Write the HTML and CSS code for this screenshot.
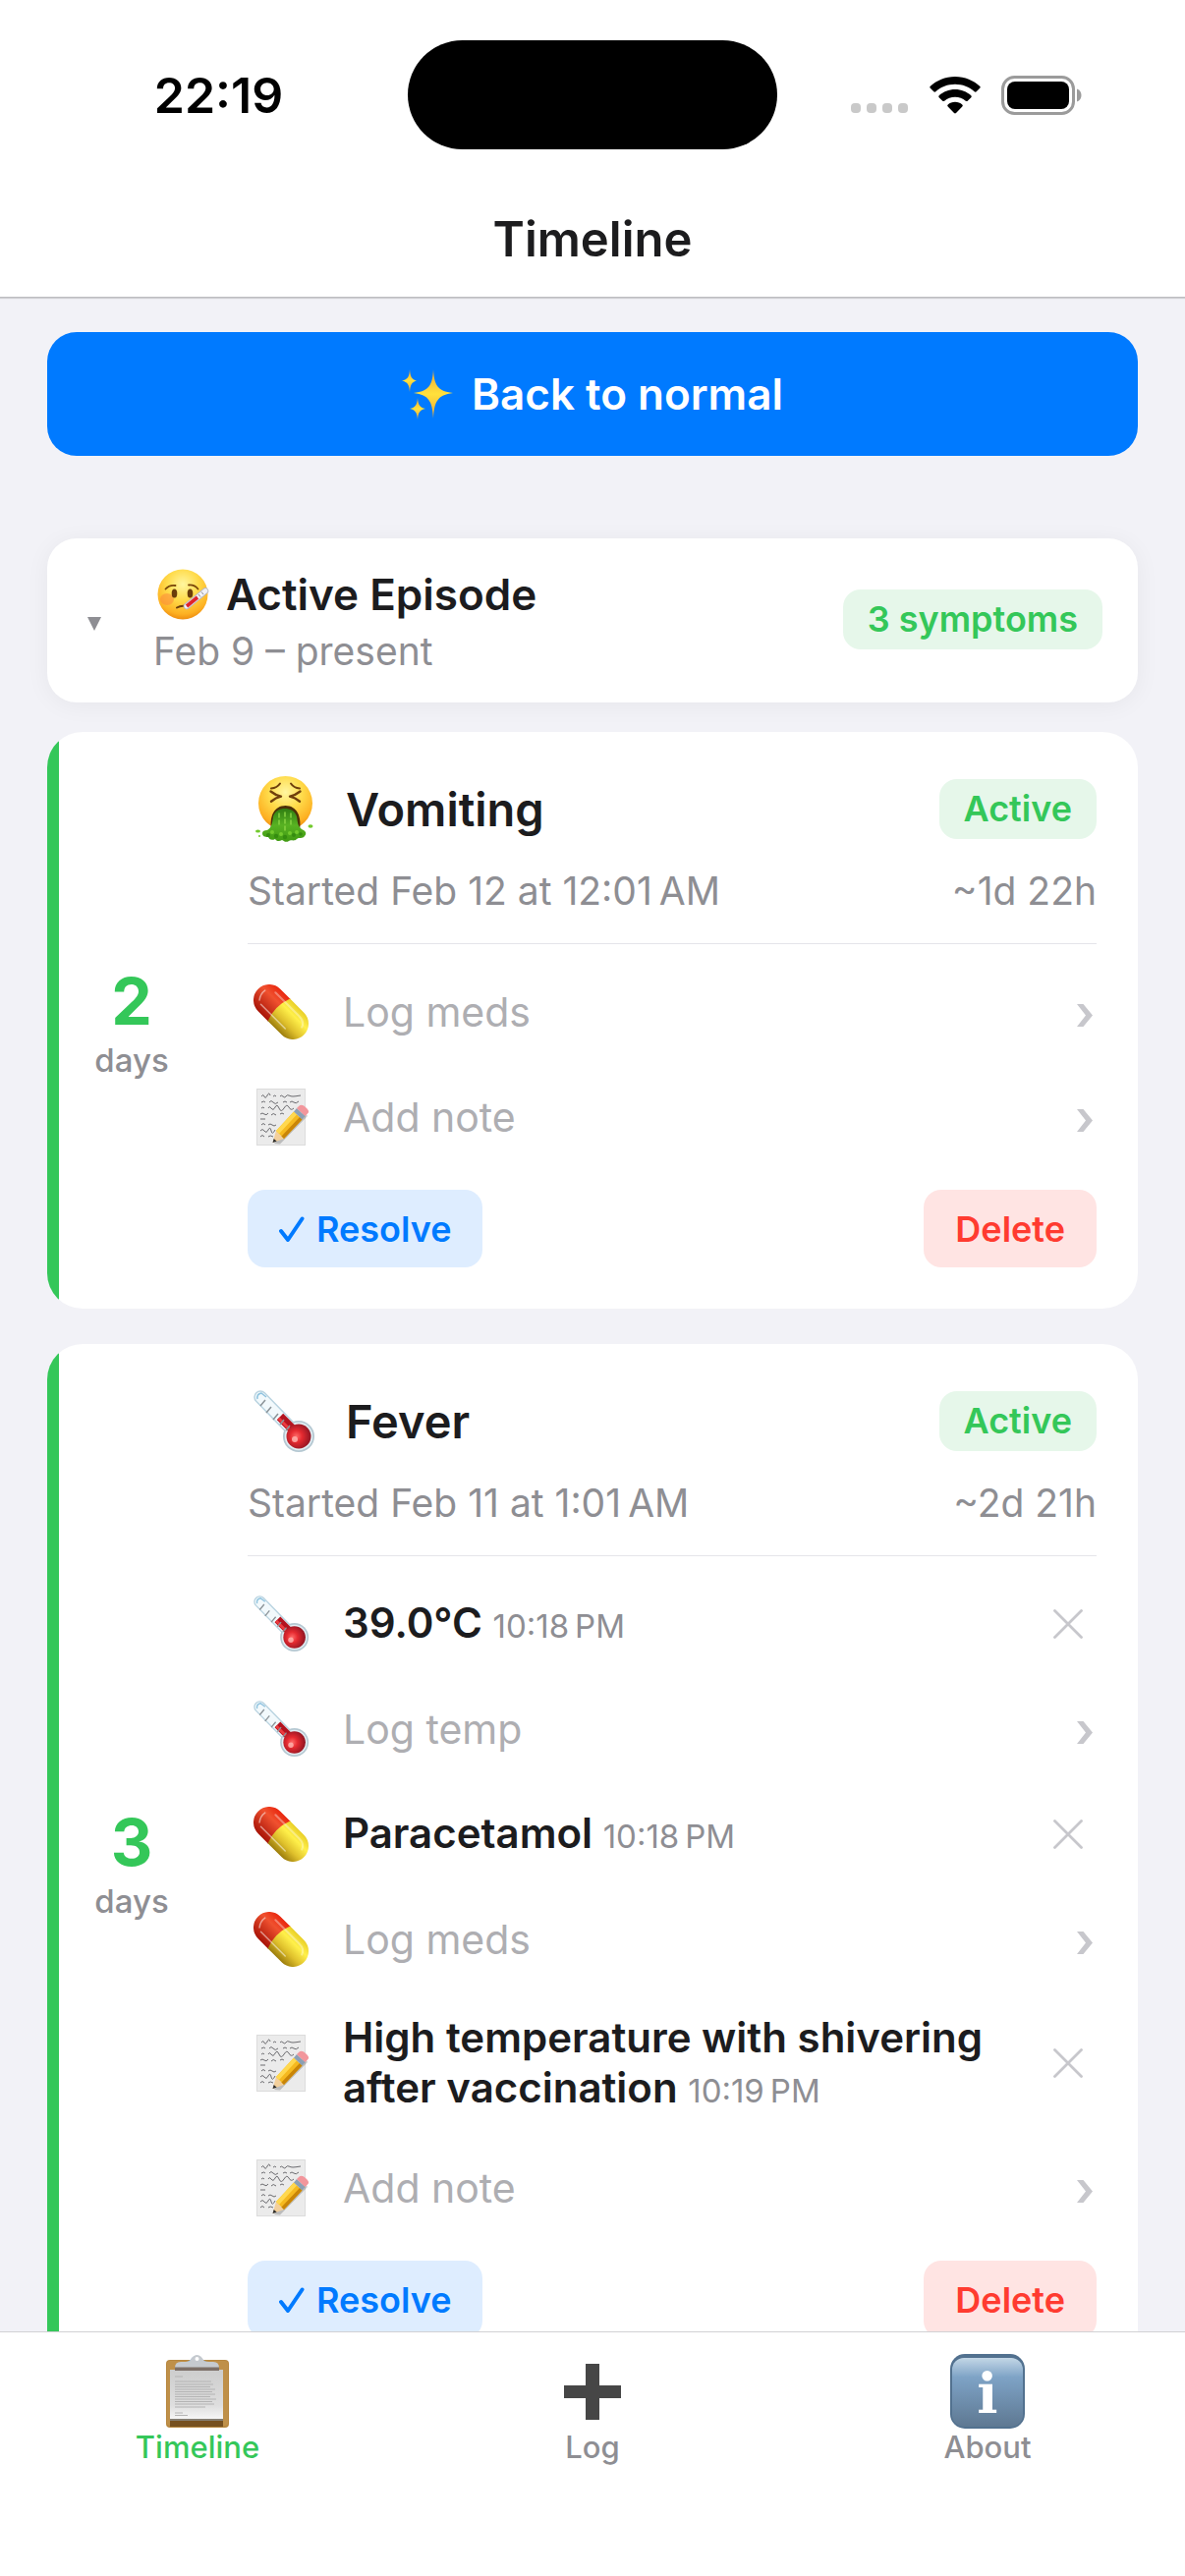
FILE: index.html
```html
<!DOCTYPE html>
<html lang="en">
<head>
    <meta charset="UTF-8">
    <meta name="viewport" content="width=device-width, initial-scale=1.0">
    <title>Timeline</title>
    <link rel="stylesheet" href="styles.css">
</head>
<body>
    <!-- Shared icons -->
    <svg class="sprite" width="0" height="0" aria-hidden="true">
        <defs>
            <radialGradient id="faceFill" cx="0.5" cy="0.3" r="0.7">
                <stop offset="0" stop-color="#fff6a0"/>
                <stop offset="0.45" stop-color="#ffdb4a"/>
                <stop offset="0.85" stop-color="#fdb022"/>
                <stop offset="1" stop-color="#ee8d10"/>
            </radialGradient>
            <linearGradient id="starFill" x1="0" y1="0" x2="0" y2="1">
                <stop offset="0" stop-color="#f0a535"/>
                <stop offset="0.5" stop-color="#ffe13c"/>
                <stop offset="1" stop-color="#f0a535"/>
            </linearGradient>
            <linearGradient id="pillRed" x1="0" y1="0" x2="0" y2="1">
                <stop offset="0" stop-color="#e9270f"/>
                <stop offset="0.35" stop-color="#f0512f"/>
                <stop offset="1" stop-color="#a81408"/>
            </linearGradient>
            <linearGradient id="pillYellow" x1="0" y1="0" x2="0" y2="1">
                <stop offset="0" stop-color="#e9cf28"/>
                <stop offset="0.3" stop-color="#fff04a"/>
                <stop offset="0.65" stop-color="#dfc02c"/>
                <stop offset="1" stop-color="#9c7d0c"/>
            </linearGradient>
            <linearGradient id="vomitFill" x1="0" y1="0" x2="0" y2="1">
                <stop offset="0" stop-color="#2f7d12"/>
                <stop offset="0.5" stop-color="#58b222"/>
                <stop offset="1" stop-color="#3f9a12"/>
            </linearGradient>
            <radialGradient id="bulbFill" cx="0.4" cy="0.5" r="0.6">
                <stop offset="0" stop-color="#ff6a68"/>
                <stop offset="0.4" stop-color="#e52a30"/>
                <stop offset="1" stop-color="#8e1422"/>
            </radialGradient>
            <linearGradient id="paperFill" x1="0" y1="0" x2="0" y2="1">
                <stop offset="0" stop-color="#cdcdcd"/>
                <stop offset="0.7" stop-color="#dedede"/>
                <stop offset="1" stop-color="#fafafa"/>
            </linearGradient>
            <linearGradient id="infoFill" x1="0" y1="0" x2="0" y2="1">
                <stop offset="0" stop-color="#c3d7e6"/>
                <stop offset="0.28" stop-color="#7ea3c6"/>
                <stop offset="1" stop-color="#5e7892"/>
            </linearGradient>
        </defs>

        <symbol id="icon-sparkles" viewBox="0 0 53 51">
            <path d="M32 0c1 16 4 22 20 24c-16 2-19 9-20 26c-1-17-4-24-20-26c16-2 19-8 20-24z" fill="url(#starFill)"/>
            <path d="M8 0c.6 8 2 10 7 11.500c-5 1.500-6.400 4-7 11.500c-.6-7.500-2-10-8-11.500c6-1.500 7.400-3.500 8-11.500z" fill="url(#starFill)"/>
            <path d="M16 29c.6 7 2 9.500 8 11c-6 1.500-7.400 4-8 11c-.6-7-2-9.500-8-11c6-1.500 7.400-4 8-11z" fill="url(#starFill)"/>
        </symbol>

        <symbol id="icon-sick" viewBox="0 0 54 52">
            <circle cx="26" cy="26" r="25.500" fill="url(#faceFill)"/>
            <ellipse cx="10" cy="31" rx="7" ry="6" fill="#fb8a3c" opacity="0.55"/>
            <ellipse cx="17.500" cy="25" rx="2.800" ry="4.500" fill="#6b3d0a"/>
            <ellipse cx="33.500" cy="25" rx="2.800" ry="4.500" fill="#6b3d0a"/>
            <path d="M8.500 20.500q4-4.500 10-3.500M32 16.500q6-.5 9.500 4" fill="none" stroke="#7a4709" stroke-width="1.800" stroke-linecap="round"/>
            <path d="M20 39.500q5-3 11-1" fill="none" stroke="#6b3d0a" stroke-width="2" stroke-linecap="round"/>
            <path d="M30 38L49 22.500" stroke="#b9b9c2" stroke-width="6.500" stroke-linecap="round"/>
            <path d="M30 38L49 22.500" stroke="#f1f1f5" stroke-width="4.800" stroke-linecap="round"/>
            <path d="M30 38L41 29" stroke="#e0222c" stroke-width="3.600"/>
            <path d="M42 26l2 2.500M45 23.500l2 2.500" stroke="#8d8d96" stroke-width="1"/>
        </symbol>

        <symbol id="icon-vomit" viewBox="0 0 60 68">
            <circle cx="31.500" cy="28.500" r="27.500" fill="url(#faceFill)"/>
            <path d="M17 13.500q6-.5 9-5M46 13.500q-6-.5-9-5" fill="none" stroke="#70400c" stroke-width="2" stroke-linecap="round"/>
            <path d="M16.500 16.500q5 4 10.500 5.200q-5.500 1.300-10 5M46.500 16.500q-5 4-10.500 5.200q5.500 1.300 10 5" fill="none" stroke="#70400c" stroke-width="2.400" stroke-linecap="round" stroke-linejoin="round"/>
            <path d="M17 55c-2-13 3-24 14.500-24S48 42 46 55z" fill="#4c3008"/>
            <path d="M19 42c2-6 7-8 12-8s10 2 12 8c1 6 1 10 5 13c5 2 5 5 3 7c-2 3-6 1-8 3c-3 3-6 0-8 2c-3 2-5 0-7-1c-3 2-6 1-7-1c-4 2-6 0-7-2c-4 0-6-1-6-4c0-2 2-3 5-3c5-3 5-8 6-13z" fill="url(#vomitFill)"/>
            <g fill="#358c10">
                <circle cx="14" cy="61" r="2"/><circle cx="22" cy="62" r="2.200"/><circle cx="31" cy="63" r="2.200"/><circle cx="40" cy="61" r="2"/><circle cx="47" cy="60" r="1.800"/>
            </g>
            <path d="M25 39v14M31 38v19M37 39v14" stroke="#87d242" stroke-width="1.500" stroke-linecap="round" stroke-dasharray="4 3"/>
            <g fill="#72c92d">
                <circle cx="18" cy="58" r="2"/><circle cx="27" cy="60" r="2"/><circle cx="36" cy="59" r="2"/><circle cx="43" cy="58" r="2"/>
                <ellipse cx="3.500" cy="57" rx="2.500" ry="1.500"/><ellipse cx="57" cy="52" rx="2.500" ry="1.800"/><circle cx="5" cy="62" r="1"/>
            </g>
        </symbol>

        <symbol id="icon-pill" viewBox="0 0 56 56" preserveAspectRatio="xMinYMid">
            <g transform="rotate(45 28 28)">
                <path d="M26 12H11a16 16 0 0 0 0 32h15z" fill="url(#pillRed)"/>
                <path d="M25 12h20a16 16 0 0 1 0 32h-20q-6-16 0-32z" fill="url(#pillYellow)"/>
                <path d="M4 35q-4-5-3-11M8 37h35" fill="none" stroke="#fff" stroke-width="1.500" stroke-linecap="round" opacity="0.500"/>
                <path d="M10 18h34q8 0 10 6" fill="none" stroke="#fff" stroke-width="2" stroke-linecap="round" opacity="0.350"/>
            </g>
        </symbol>

        <symbol id="icon-note" viewBox="0 0 54 58">
            <path d="M0 0h50v58H0z" fill="#dcdcdc"/>
            <path d="M1 1h48v56H1z" fill="#ebebeb"/>
            <path d="M5 8q2-3 3 0t3-1t3 0M17 8q2-2 3 0M24 8q1-2 3 0t3 0t3-1t4 1t8-1M5 14q3-2 4 0M13 14q2-3 4 0t5 0M27 14q2-2 4 0M34 14q2-2 4 0t5-1M5 20q2-2 3 0M12 20q1-3 3 0t4-1t4 1t5 0t5-1t5 1M4 26q2-2 4 0t4-1M15 27q2-3 5 0M24 26q2-2 4 0M4 31h5M5 37q2-3 4 0M12 37q2-2 4 0t4 0M4 43q2-3 4 0t4-1t3 1t4-1M4 49q2-3 4 0M12 49q2-2 5 0" fill="none" stroke="#6c6c70" stroke-width="1"/>
            <path d="M18 56l6 .5L52 28l-3-5z" fill="#000" opacity="0.200"/>
            <path d="M16.500 55l3.500-12l8 8z" fill="#f3cf9b"/>
            <path d="M16.500 55l1.200-4l3 2.800z" fill="#2c2c2c"/>
            <path d="M20 43L38 23.500l8.500 8L28 51z" fill="#f5b91f"/>
            <path d="M20 43L38 23.500l3 3L23 46z" fill="#ffd84f"/>
            <path d="M25.500 48.500L44 29l2.500 2.500L28 51z" fill="#c98508"/>
            <path d="M38 23.500l3-3.500l8.500 8l-3 3.500z" fill="#8ba0b5"/>
            <path d="M41 20l2-2q3-3 7 1q5 4 2 6.500L49.500 28z" fill="#f2969c"/>
        </symbol>

        <symbol id="icon-thermometer" viewBox="0 0 62 63" preserveAspectRatio="xMinYMid">
            <path d="M7 7L46 47" stroke="#b9d3e0" stroke-width="13.500" stroke-linecap="round"/>
            <circle cx="46" cy="47" r="16" fill="#b5c8d2"/>
            <path d="M7 7L46 47" stroke="#f2f9fc" stroke-width="10.500" stroke-linecap="round"/>
            <circle cx="46" cy="47" r="14.200" fill="#e3eef3"/>
            <path d="M27 27L44 44" stroke="#b3131f" stroke-width="9"/>
            <path d="M25.500 28.500L42 45" stroke="#ec3b3f" stroke-width="3"/>
            <circle cx="46" cy="47" r="12.500" fill="url(#bulbFill)"/>
            <circle cx="42" cy="50" r="3" fill="#ffb9b4" opacity="0.800"/>
            <path d="M12 10l-5 6M18 17l-5 6M25 24l-5 6M31 30l-4 5M37 36l-4 5" stroke="#8c9499" stroke-width="1.500"/>
            <path d="M4 9q-1-5 4-6l5 4" fill="none" stroke="#8fc3df" stroke-width="1.500"/>
        </symbol>

        <symbol id="icon-clipboard" viewBox="0 0 64 74">
            <rect x="0" y="5" width="64" height="69" rx="4" fill="#b7873f"/>
            <rect x="1" y="6" width="62" height="66" rx="3" fill="#bf9049"/>
            <path d="M4 67h54v6H4z" fill="#76501f"/>
            <path d="M4 15h54v52H4z" fill="url(#paperFill)"/>
            <path d="M4 66h54" stroke="#5f5646" stroke-width="1.500"/>
            <path d="M9 22h8M9 27h37M9 30h39M9 32.500h36M9 35h41M9 37.500h38M9 40h41M9 42.500h36M9 45h42M9 47.500h38M9 50h40M9 53h31M9 59h8M9 61.500h13" stroke="#b4b4b4" stroke-width="1"/>
            <path d="M20 7q5-1 6-4q5-5 10 0q2 4 8 4z" fill="#a9c2dd"/>
            <path d="M9 13q0-6 6-6h9q3-7 7.500-7t7.500 7h9q6 0 6 6v2H9z" fill="#c6cacf"/>
            <path d="M9 12.500h45V16H9z" fill="#7d7069"/>
            <circle cx="31.500" cy="4" r="2" fill="#fff"/>
        </symbol>

        <symbol id="icon-check" viewBox="0 0 26 26">
            <path d="M2 15l7 9L23.500 2.500" fill="none" stroke="currentColor" stroke-width="4" stroke-linecap="round" stroke-linejoin="round"/>
        </symbol>

        <symbol id="icon-chevron" viewBox="0 0 16 34">
            <path d="M0 9h6.500L16 20.500L6.500 32H0l9-11.500z" fill="currentColor"/>
        </symbol>

        <symbol id="icon-close" viewBox="0 0 30 30">
            <path d="M1.500 1.500l27 27M28.500 1.500l-27 27" stroke="currentColor" stroke-width="2.800" stroke-linecap="round"/>
        </symbol>
    </svg>

    <header>
        <div class="status-bar">
            <span class="status-time">22:19</span>
            <span class="island"></span>
            <span class="status-icons">
                <svg width="59" height="38" viewBox="0 0 59 38" aria-hidden="true">
                    <g fill="#c9c9c9">
                        <rect x="0" y="27" width="10" height="10" rx="4"/>
                        <rect x="16" y="27" width="10" height="10" rx="4"/>
                        <rect x="32" y="27" width="10" height="10" rx="4"/>
                        <rect x="48" y="27" width="10" height="10" rx="4"/>
                    </g>
                </svg>
                <svg width="52" height="38" viewBox="0 0 52 38" aria-hidden="true">
                    <path d="M26 0C16 0 7 4 .8 9.800q-1 1 0 2l3.500 3.500q1 .9 2 0C11.500 10.500 18.500 7.800 26 7.800s14.500 2.700 19.700 7.500q1 .9 2 0l3.500-3.500q1-1 0-2C45 4 36 0 26 0z"/>
                    <path d="M26 13c-6.300 0-12 2.400-16.300 6.200q-1 1 0 2l3.600 3.500q.9.800 1.900 0c2.900-2.500 6.700-4 10.800-4s7.900 1.500 10.800 4q1 .8 1.900 0l3.600-3.500q1-1 0-2C38 15.400 32.300 13 26 13z"/>
                    <path d="M26 25.800c-2.800 0-5.400 1-7.300 2.700q-1.100 1 0 2l6.300 6.600q1 .9 2 0l6.300-6.600q1.100-1 0-2C31.400 26.800 28.800 25.800 26 25.800z"/>
                </svg>
                <svg width="82" height="40" viewBox="0 0 82 40" aria-hidden="true">
                    <rect x="1.500" y="1.500" width="72" height="37" rx="12" fill="none" stroke="#9b9b9b" stroke-width="3"/>
                    <rect x="6" y="6" width="63" height="28" rx="8"/>
                    <path d="M77 13.500c6 2 6 11 0 13z" fill="#9b9b9b"/>
                </svg>
            </span>
        </div>
        <h1>Timeline</h1>
    </header>

    <main>
        <button class="btn-normal">
            <svg width="53" height="51" aria-hidden="true"><use href="#icon-sparkles"/></svg>
            Back to normal
        </button>

        <section class="episode">
            <button class="episode-header" aria-expanded="true">
                <svg class="toggle" width="24" height="22" viewBox="0 0 24 22" aria-hidden="true"><path d="M5 8h14l-7 14z" fill="currentColor"/></svg>
                <span class="episode-info">
                    <span class="episode-title">
                        <svg width="54" height="52" aria-hidden="true"><use href="#icon-sick"/></svg>
                        Active Episode
                    </span>
                    <span class="episode-dates">Feb 9 – present</span>
                </span>
                <span class="badge">3 symptoms</span>
            </button>

            <article class="card">
                <div class="counter">
                    <strong>2</strong>
                    <span>days</span>
                </div>
                <div class="card-body">
                    <div class="card-header">
                        <svg class="symptom-icon" width="60" height="68" aria-hidden="true"><use href="#icon-vomit"/></svg>
                        <h2>Vomiting</h2>
                        <span class="badge">Active</span>
                    </div>
                    <div class="card-dates">
                        <span>Started Feb 12 at 12:01&thinsp;AM</span>
                        <span>~1d 22h</span>
                    </div>
                    <ul class="entries">
                        <li>
                            <button class="entry entry-add">
                                <svg class="entry-icon" width="60" height="56" aria-hidden="true"><use href="#icon-pill"/></svg>
                                <span class="entry-text">Log meds</span>
                                <svg class="chevron" width="16" height="34" aria-hidden="true"><use href="#icon-chevron"/></svg>
                            </button>
                        </li>
                        <li>
                            <button class="entry entry-add">
                                <svg class="entry-icon" width="60" height="58" aria-hidden="true"><use href="#icon-note"/></svg>
                                <span class="entry-text">Add note</span>
                                <svg class="chevron" width="16" height="34" aria-hidden="true"><use href="#icon-chevron"/></svg>
                            </button>
                        </li>
                    </ul>
                    <div class="actions">
                        <button class="btn btn-resolve">
                            <svg width="26" height="26" aria-hidden="true"><use href="#icon-check"/></svg>
                            Resolve
                        </button>
                        <button class="btn btn-delete">Delete</button>
                    </div>
                </div>
            </article>

            <article class="card">
                <div class="counter">
                    <strong>3</strong>
                    <span>days</span>
                </div>
                <div class="card-body">
                    <div class="card-header">
                        <svg class="symptom-icon" width="62" height="63" aria-hidden="true"><use href="#icon-thermometer"/></svg>
                        <h2>Fever</h2>
                        <span class="badge">Active</span>
                    </div>
                    <div class="card-dates">
                        <span>Started Feb 11 at 1:01&thinsp;AM</span>
                        <span>~2d 21h</span>
                    </div>
                    <ul class="entries">
                        <li class="entry">
                            <svg class="entry-icon" width="60" height="57" aria-hidden="true"><use href="#icon-thermometer"/></svg>
                            <span class="entry-text">39.0°C <time>10:18&thinsp;PM</time></span>
                            <button class="remove" aria-label="Remove temperature">
                                <svg width="30" height="30" aria-hidden="true"><use href="#icon-close"/></svg>
                            </button>
                        </li>
                        <li>
                            <button class="entry entry-add">
                                <svg class="entry-icon" width="60" height="57" aria-hidden="true"><use href="#icon-thermometer"/></svg>
                                <span class="entry-text">Log temp</span>
                                <svg class="chevron" width="16" height="34" aria-hidden="true"><use href="#icon-chevron"/></svg>
                            </button>
                        </li>
                        <li class="entry">
                            <svg class="entry-icon" width="60" height="56" aria-hidden="true"><use href="#icon-pill"/></svg>
                            <span class="entry-text">Paracetamol <time>10:18&thinsp;PM</time></span>
                            <button class="remove" aria-label="Remove medication">
                                <svg width="30" height="30" aria-hidden="true"><use href="#icon-close"/></svg>
                            </button>
                        </li>
                        <li>
                            <button class="entry entry-add">
                                <svg class="entry-icon" width="60" height="56" aria-hidden="true"><use href="#icon-pill"/></svg>
                                <span class="entry-text">Log meds</span>
                                <svg class="chevron" width="16" height="34" aria-hidden="true"><use href="#icon-chevron"/></svg>
                            </button>
                        </li>
                        <li class="entry">
                            <svg class="entry-icon" width="60" height="58" aria-hidden="true"><use href="#icon-note"/></svg>
                            <span class="entry-text">High temperature with shivering after vaccination <time>10:19&thinsp;PM</time></span>
                            <button class="remove" aria-label="Remove note">
                                <svg width="30" height="30" aria-hidden="true"><use href="#icon-close"/></svg>
                            </button>
                        </li>
                        <li>
                            <button class="entry entry-add">
                                <svg class="entry-icon" width="60" height="58" aria-hidden="true"><use href="#icon-note"/></svg>
                                <span class="entry-text">Add note</span>
                                <svg class="chevron" width="16" height="34" aria-hidden="true"><use href="#icon-chevron"/></svg>
                            </button>
                        </li>
                    </ul>
                    <div class="actions">
                        <button class="btn btn-resolve">
                            <svg width="26" height="26" aria-hidden="true"><use href="#icon-check"/></svg>
                            Resolve
                        </button>
                        <button class="btn btn-delete">Delete</button>
                    </div>
                </div>
            </article>
        </section>
    </main>

    <nav class="tab-bar">
        <a class="tab active" href="#timeline" aria-current="page">
            <svg width="76" height="76" viewBox="0 0 76 76" aria-hidden="true"><use href="#icon-clipboard" x="6" y="1" width="64" height="74"/></svg>
            Timeline
        </a>
        <a class="tab" href="#log">
            <svg width="76" height="76" viewBox="0 0 76 76" aria-hidden="true"><path d="M31 10h14v22h22v13H45v22H31V45H9V32h22z" fill="#464646"/></svg>
            Log
        </a>
        <a class="tab" href="#about">
            <svg width="76" height="76" viewBox="0 0 76 76" aria-hidden="true">
                <rect x="0" y="0" width="76" height="76" rx="15" fill="#52718f"/>
                <rect x="2" y="4" width="72" height="70" rx="12" fill="url(#infoFill)"/>
                <text class="info-letter" x="38" y="60" text-anchor="middle">i</text>
            </svg>
            About
        </a>
    </nav>
</body>
</html>
```
FILE: styles.css
```css
:root {
    --green: #34c759;
    --blue: #007aff;
    --red: #ff3b30;
    --text-color: #1c1c1e;
    --muted: #8e8e93;
    --placeholder: #aeaeb2;
    --faint: #c7c7cc;
    --page-bg: #f2f2f7;
    --line: #e5e5ea;
}

* {
    box-sizing: border-box;
}

body {
    display: flex;
    flex-direction: column;
    height: 100vh;
    margin: 0;
    font-family: Inter, "Liberation Sans", sans-serif;
    color: var(--text-color);
    background-color: var(--page-bg);
}

button {
    padding: 0;
    border: none;
    background: none;
    font: inherit;
    color: inherit;
    text-align: left;
    cursor: pointer;
}

svg {
    flex: none;
}

.sprite {
    position: absolute;
}

/* Header */

header {
    flex: none;
    position: relative;
    background-color: white;
    border-bottom: 1px solid #bdbdc1;
    box-shadow: 0 1px 1px rgba(0, 0, 0, 0.15);
}

.status-bar {
    display: grid;
    grid-template-columns: 1fr 376px 1fr;
    align-items: center;
    padding: 41px 30px 34px;
}

.status-time {
    font-size: 50px;
    font-weight: 600;
    line-height: 60px;
    text-align: center;
    color: black;
}

.island {
    height: 111px;
    border-radius: 56px;
    background-color: black;
}

.status-icons {
    display: flex;
    justify-content: center;
    align-items: center;
    gap: 21px;
}

h1 {
    margin: 0;
    font-size: 49px;
    font-weight: 600;
    line-height: 116px;
    text-align: center;
}

/* Timeline */

main {
    flex: 1;
    min-height: 0;
    overflow: hidden;
    padding: 35px 48px;
}

.btn-normal {
    display: flex;
    justify-content: center;
    align-items: center;
    gap: 18px;
    width: 100%;
    height: 126px;
    margin-bottom: 84px;
    border-radius: 30px;
    background-color: var(--blue);
    font-size: 44px;
    font-weight: 600;
    color: white;
}

.episode-header {
    display: flex;
    align-items: center;
    width: 100%;
    margin-bottom: 30px;
    padding: 25px 36px 27px;
    border-radius: 30px;
    background-color: white;
    box-shadow: 0 3px 24px rgba(0, 0, 0, 0.05);
}

.toggle {
    margin-right: 48px;
    color: var(--muted);
}

.episode-info {
    flex: 1;
}

.episode-title {
    display: flex;
    align-items: center;
    gap: 16px;
    padding-left: 4px;
    font-size: 44px;
    font-weight: 600;
    line-height: 64px;
}

.episode-dates {
    display: block;
    font-size: 39px;
    line-height: 51px;
    color: var(--muted);
}

.badge {
    padding: 0 25px;
    border-radius: 18px;
    background-color: #e6f7ea;
    font-size: 36px;
    font-weight: 600;
    line-height: 61px;
    color: var(--green);
}

.card {
    display: flex;
    align-items: center;
    margin-bottom: 36px;
    padding: 42px 42px 42px 12px;
    border-radius: 36px;
    background: linear-gradient(to right, var(--green) 12px, white 12px);
}

.counter {
    flex: none;
    width: 148px;
    margin-right: 44px;
    padding-top: 8px;
    text-align: center;
    color: var(--muted);
}

.counter strong,
.counter span {
    display: block;
}

.counter strong {
    font-size: 66px;
    font-weight: 700;
    line-height: 72px;
    color: var(--green);
}

.counter span {
    font-size: 33px;
    font-weight: 500;
    line-height: 48px;
}

.card-body {
    flex: 1;
    min-width: 0;
}

.card-header {
    display: flex;
    align-items: center;
    height: 72px;
    padding-left: 6px;
}

.symptom-icon {
    width: 62px;
    margin-right: 32px;
}

h2 {
    flex: 1;
    margin: 0;
    font-size: 47px;
    font-weight: 600;
}

.card-dates {
    display: flex;
    justify-content: space-between;
    margin-top: 24px;
    padding-bottom: 29px;
    border-bottom: 1px solid var(--line);
    font-size: 39px;
    line-height: 48px;
    color: var(--muted);
}

.entries {
    margin: 15px 0 21px;
    padding: 0;
    list-style: none;
}

.entry {
    display: flex;
    align-items: center;
    width: 100%;
    min-height: 107px;
    padding: 19px 0 19px 6px;
    font-size: 42px;
    font-weight: 600;
    line-height: 51px;
}

.entry-icon {
    margin-right: 31px;
}

.entry-text {
    flex: 1;
    padding-top: 2px;
}

.entry-add {
    padding-right: 4px;
    font-size: 41px;
    font-weight: 400;
    color: var(--placeholder);
}

.entry time {
    font-size: 33px;
    font-weight: 400;
    color: var(--muted);
    white-space: nowrap;
}

.chevron {
    color: var(--faint);
}

.remove {
    display: flex;
    justify-content: center;
    width: 58px;
    color: var(--faint);
}

.actions {
    display: flex;
    justify-content: space-between;
}

.btn {
    display: flex;
    align-items: center;
    gap: 12px;
    height: 79px;
    padding: 0 32px;
    border-radius: 18px;
    font-size: 36px;
    font-weight: 600;
}

.btn-resolve {
    background-color: #deedff;
    color: var(--blue);
}

.btn-delete {
    background-color: #ffe4e3;
    color: var(--red);
}

/* Tab bar */

.tab-bar {
    display: flex;
    flex: none;
    height: 249px;
    padding-top: 22px;
    border-top: 1px solid #d1d1d4;
    background-color: white;
}

.tab {
    display: flex;
    flex: 1;
    flex-direction: column;
    align-items: center;
    font-size: 31px;
    font-weight: 500;
    line-height: 38px;
    text-decoration: none;
    color: var(--muted);
}

.tab.active {
    color: var(--green);
}

.info-letter {
    font-family: "DejaVu Serif", serif;
    font-size: 56px;
    font-weight: 700;
    fill: white;
}
```
